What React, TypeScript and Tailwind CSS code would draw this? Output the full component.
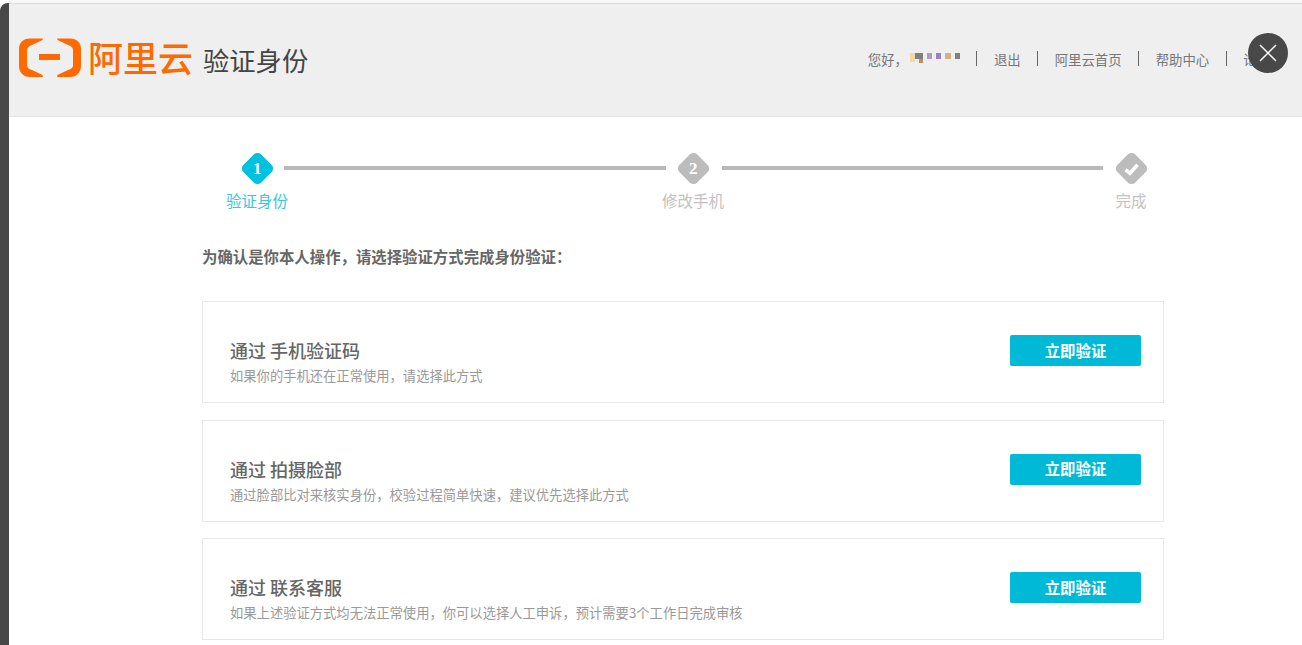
const font = { fontFamily: '"Noto Sans CJK SC", "Liberation Sans", sans-serif' };

function Diamond({ color, children }: { color: string; children: React.ReactNode }) {
  return (
    <div className="flex h-8 w-8 items-center justify-center">
      <div className={`flex h-[25px] w-[25px] shrink-0 rotate-45 items-center justify-center rounded-[5px] ${color}`}>
        <div className="-rotate-45 text-[17px] leading-none font-bold text-white [font-family:'Liberation_Serif',serif]">{children}</div>
      </div>
    </div>
  );
}

function Step({ label, color, labelColor, children }: { label: string; color: string; labelColor: string; children: React.ReactNode }) {
  return (
    <div className="flex w-8 flex-col items-center">
      <Diamond color={color}>{children}</Diamond>
      <div className={`mt-[5px] whitespace-nowrap text-[15.5px] leading-[22px] ${labelColor}`}>{label}</div>
    </div>
  );
}

function Card({ title, desc, mt }: { title: string; desc: string; mt: string }) {
  return (
    <div className={`flex h-[102px] items-start justify-between border border-[#e8e8e8] pr-[22px] pl-[27px] ${mt}`}>
      <div className="pt-[35px]">
        <div className="text-[18px] leading-[26px] font-medium whitespace-pre text-[#666666]">{title}</div>
        <div className="mt-[3px] text-[13.3px] leading-[20px] text-[#999999]">{desc}</div>
      </div>
      <button className="mt-[33px] h-[31px] w-[131px] rounded-[2px] bg-[#00b9d7] text-[15.4px] font-bold text-white">立即验证</button>
    </div>
  );
}

function Sep() {
  return <span className="mx-[16.500px] h-[15px] w-px bg-[#666666]" />;
}

export default function App() {
  return (
    <div className="relative flex h-[645px] w-[1302px] overflow-hidden bg-white" style={font}>
      <div className="mt-[3px] w-[9px] shrink-0 rounded-tl-[8px] bg-[#484848]" />
      <div className="min-w-0 flex-1">
        <div className="h-[4px] border-b border-[#dddddd] bg-[#f7f7f7]" />
        <header className="flex h-[113px] items-center border-b border-[#e4e4e4] bg-[#efefef] pb-[2px]">
          <svg width="62" height="40" viewBox="0 0 62 40" className="mb-[2px] ml-[10px] shrink-0" fill="#ff6a00">
            <path d="M24 0.500L23.500 2L13 7C10 8 8 9.500 8 12V27.500C8 30 10 31 13 32L23.500 37L24 39H11C4 39 0 34 0 28V11C0 5 4 0.500 11 0.500Z" />
            <path d="M38 0.500L38.500 2L49 7C52 8 54 9.500 54 12V27.500C54 30 52 31 49 32L38.500 37L38 39H51C58 39 62 34 62 28V11C62 5 58 0.500 51 0.500Z" />
            <rect x="20" y="16" width="21" height="6" />
          </svg>
          <div className="mb-[6px] ml-[7px] text-[35px] leading-none font-medium text-[#ff6a00]">阿里云</div>
          <div className="mt-[2px] ml-[10px] text-[26.300px] leading-none text-[#444444]">验证身份</div>
          <nav className="ml-[auto] flex items-center pr-0 text-[13.4px] text-[#777777]">
            <span>{"您好\uFF0C"}</span>
            <span className="ml-[2px] flex h-[14px] w-[50px] items-start pt-[1px]">
              <span className="h-[9px] w-[5px] bg-[#f0d8a8]" />
              <span className="flex w-[8px] flex-col items-end">
                <span className="h-[6px] w-[8px] bg-[#808080]" />
                <span className="h-[4px] w-[4px] bg-[#c09060]" />
              </span>
              <span className="ml-[4px] h-[6px] w-[5px] bg-[#b59ac0]" />
              <span className="ml-[4px] h-[6px] w-[5px] bg-[#9a80c0]" />
              <span className="ml-[4px] h-[6px] w-[6px] bg-[#d8b080]" />
              <span className="ml-[4px] h-[6px] w-[5px] bg-[#808080]" />
            </span>
            <Sep />
            <span>退出</span>
            <Sep />
            <span>阿里云首页</span>
            <Sep />
            <span>帮助中心</span>
            <Sep />
            <span className="mr-[32px]">论坛</span>
          </nav>
        </header>
        <main className="ml-[193px] w-[962px]">
          <div className="mt-[35px] ml-[39px] flex items-start">
            <Step label="验证身份" color="bg-[#00c1de]" labelColor="text-[#37c6e2]">1</Step>
            <div className="mt-[14px] ml-[11px] h-[4px] w-[382px] bg-[#b9b9b9]" />
            <div className="ml-[11px]"><Step label="修改手机" color="bg-[#bcbcbc]" labelColor="text-[#c2c2c2]">2</Step></div>
            <div className="mt-[14px] ml-[13px] h-[4px] w-[381px] bg-[#b9b9b9]" />
            <div className="ml-[12px]">
              <Step label="完成" color="bg-[#bcbcbc]" labelColor="text-[#c2c2c2]">
                <svg width="18" height="18" viewBox="0 0 18 18" fill="none" stroke="white" strokeWidth="3.600" className="block">
                  <path d="M3 9.500L7.500 13L15 4.500" />
                </svg>
              </Step>
            </div>
          </div>
          <p className="mt-[34px] text-[15.4px] leading-[22px] font-bold text-[#666666]">{"为确认是你本人操作\uFF0C请选择验证方式完成身份验证\uFF1A"}</p>
          <div className="mt-[34px]">
            <Card mt="mt-0" title="通过 手机验证码" desc={"如果你的手机还在正常使用\uFF0C请选择此方式"} />
            <Card mt="mt-[16.500px]" title="通过 拍摄脸部" desc={"通过脸部比对来核实身份\uFF0C校验过程简单快速\uFF0C建议优先选择此方式"} />
            <Card mt="mt-[16.500px]" title="通过 联系客服" desc={"如果上述验证方式均无法正常使用\uFF0C你可以选择人工申诉\uFF0C预计需要3个工作日完成审核"} />
          </div>
        </main>
      </div>
      <div className="absolute top-[33px] left-[1248px] flex h-10 w-10 items-center justify-center rounded-full bg-[#484848]">
        <svg width="20" height="20" viewBox="0 0 20 20" stroke="white" strokeWidth="1.500" fill="none">
          <path d="M2 2L18 18M18 2L2 18" />
        </svg>
      </div>
    </div>
  );
}
